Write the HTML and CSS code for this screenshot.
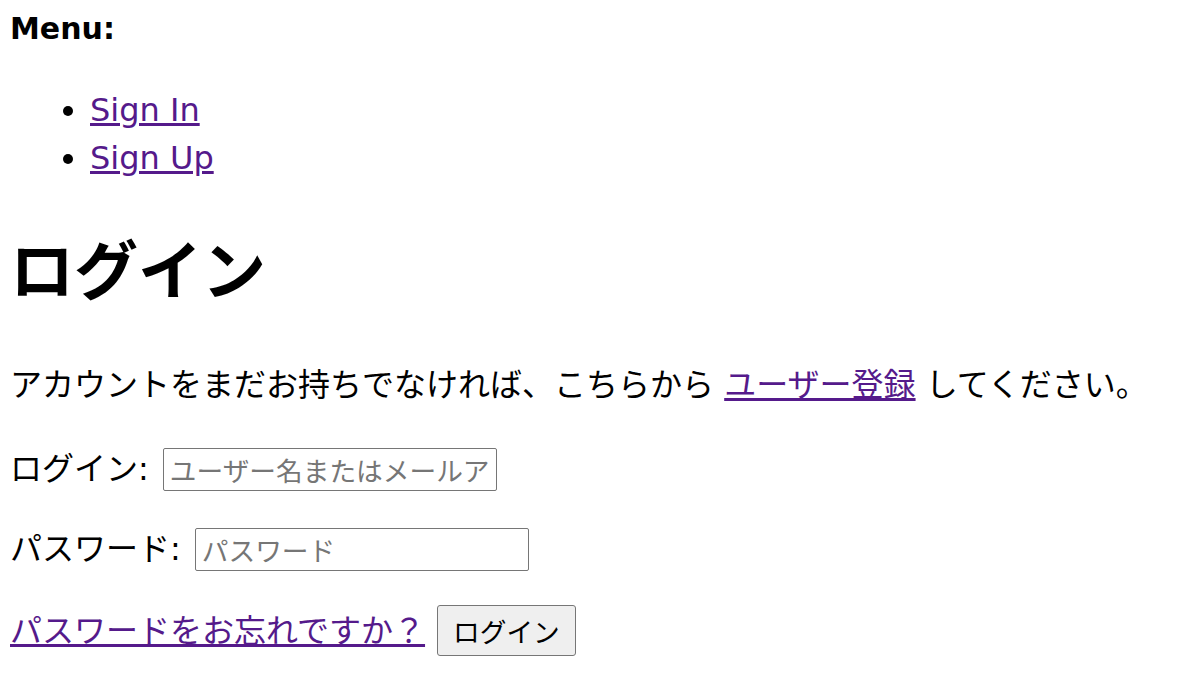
FILE: index.html
```
<!DOCTYPE html>
<html lang="ja">
<head>
  <meta charset="UTF-8" />
  <title>ログイン</title>
  <meta name="viewport" content="width=device-width, initial-scale=1" />
  <link rel="stylesheet" href="styles.css">
</head>
<body>
  <p class="menu-title"><strong>Menu:</strong></p>
  <ul class="menu">
    <li><a href="#">Sign In</a></li>
    <li><a href="#">Sign Up</a></li>
  </ul>

  <h1>ログイン</h1>

  <p class="intro">アカウントをまだお持ちでなければ、こちらから <a href="#">ユーザー登録</a> してください。</p>

  <form class="login-form">
    <p class="field">
      <label for="login">ログイン:</label>
      <input type="text" id="login" placeholder="ユーザー名またはメールアドレス" />
    </p>
    <p class="field">
      <label for="password">パスワード:</label>
      <input type="password" id="password" placeholder="パスワード" />
    </p>
    <p class="field actions">
      <a href="#">パスワードをお忘れですか？</a>
      <button type="submit">ログイン</button>
    </p>
  </form>
</body>
</html>
```

FILE: styles.css
```
body {
  font-family: 'DejaVu Sans', 'Noto Sans CJK JP', sans-serif;
  font-size: 32px;
  line-height: 48px;
  margin: 0;
  padding: 0 10px;
  color: #000;
  background: #fff;
}
a {
  color: #551a8b;
}
.menu-title {
  margin: 5px 0 0;
  font-size: 30px;
}
.menu {
  margin: 33px 0 0;
  padding-left: 80px;
}
h1 {
  font-family: 'Noto Sans CJK JP', sans-serif;
  font-size: 64px;
  line-height: 80px;
  margin: 44px 0 0;
}
.intro {
  margin: 55px 0 0;
}
.login-form {
  margin: 0;
  padding-top: 4px;
}
.field {
  display: flex;
  align-items: center;
  gap: 14px;
  margin: 32px 0 0;
}
.actions {
  gap: 12px;
}
.field input {
  box-sizing: border-box;
  width: 334px;
  height: 43px;
  padding: 2px 6px;
  font-family: 'Noto Sans CJK JP', sans-serif;
  font-size: 26.7px;
  border: 1px solid #767676;
  border-radius: 2px;
}
.field input::placeholder {
  color: #767676;
}
.field button {
  box-sizing: border-box;
  height: 51px;
  padding: 0 15px;
  font-family: 'Noto Sans CJK JP', sans-serif;
  font-size: 26.7px;
  background: #efefef;
  border: 1px solid #767676;
  border-radius: 3px;
  color: #000;
}
```
